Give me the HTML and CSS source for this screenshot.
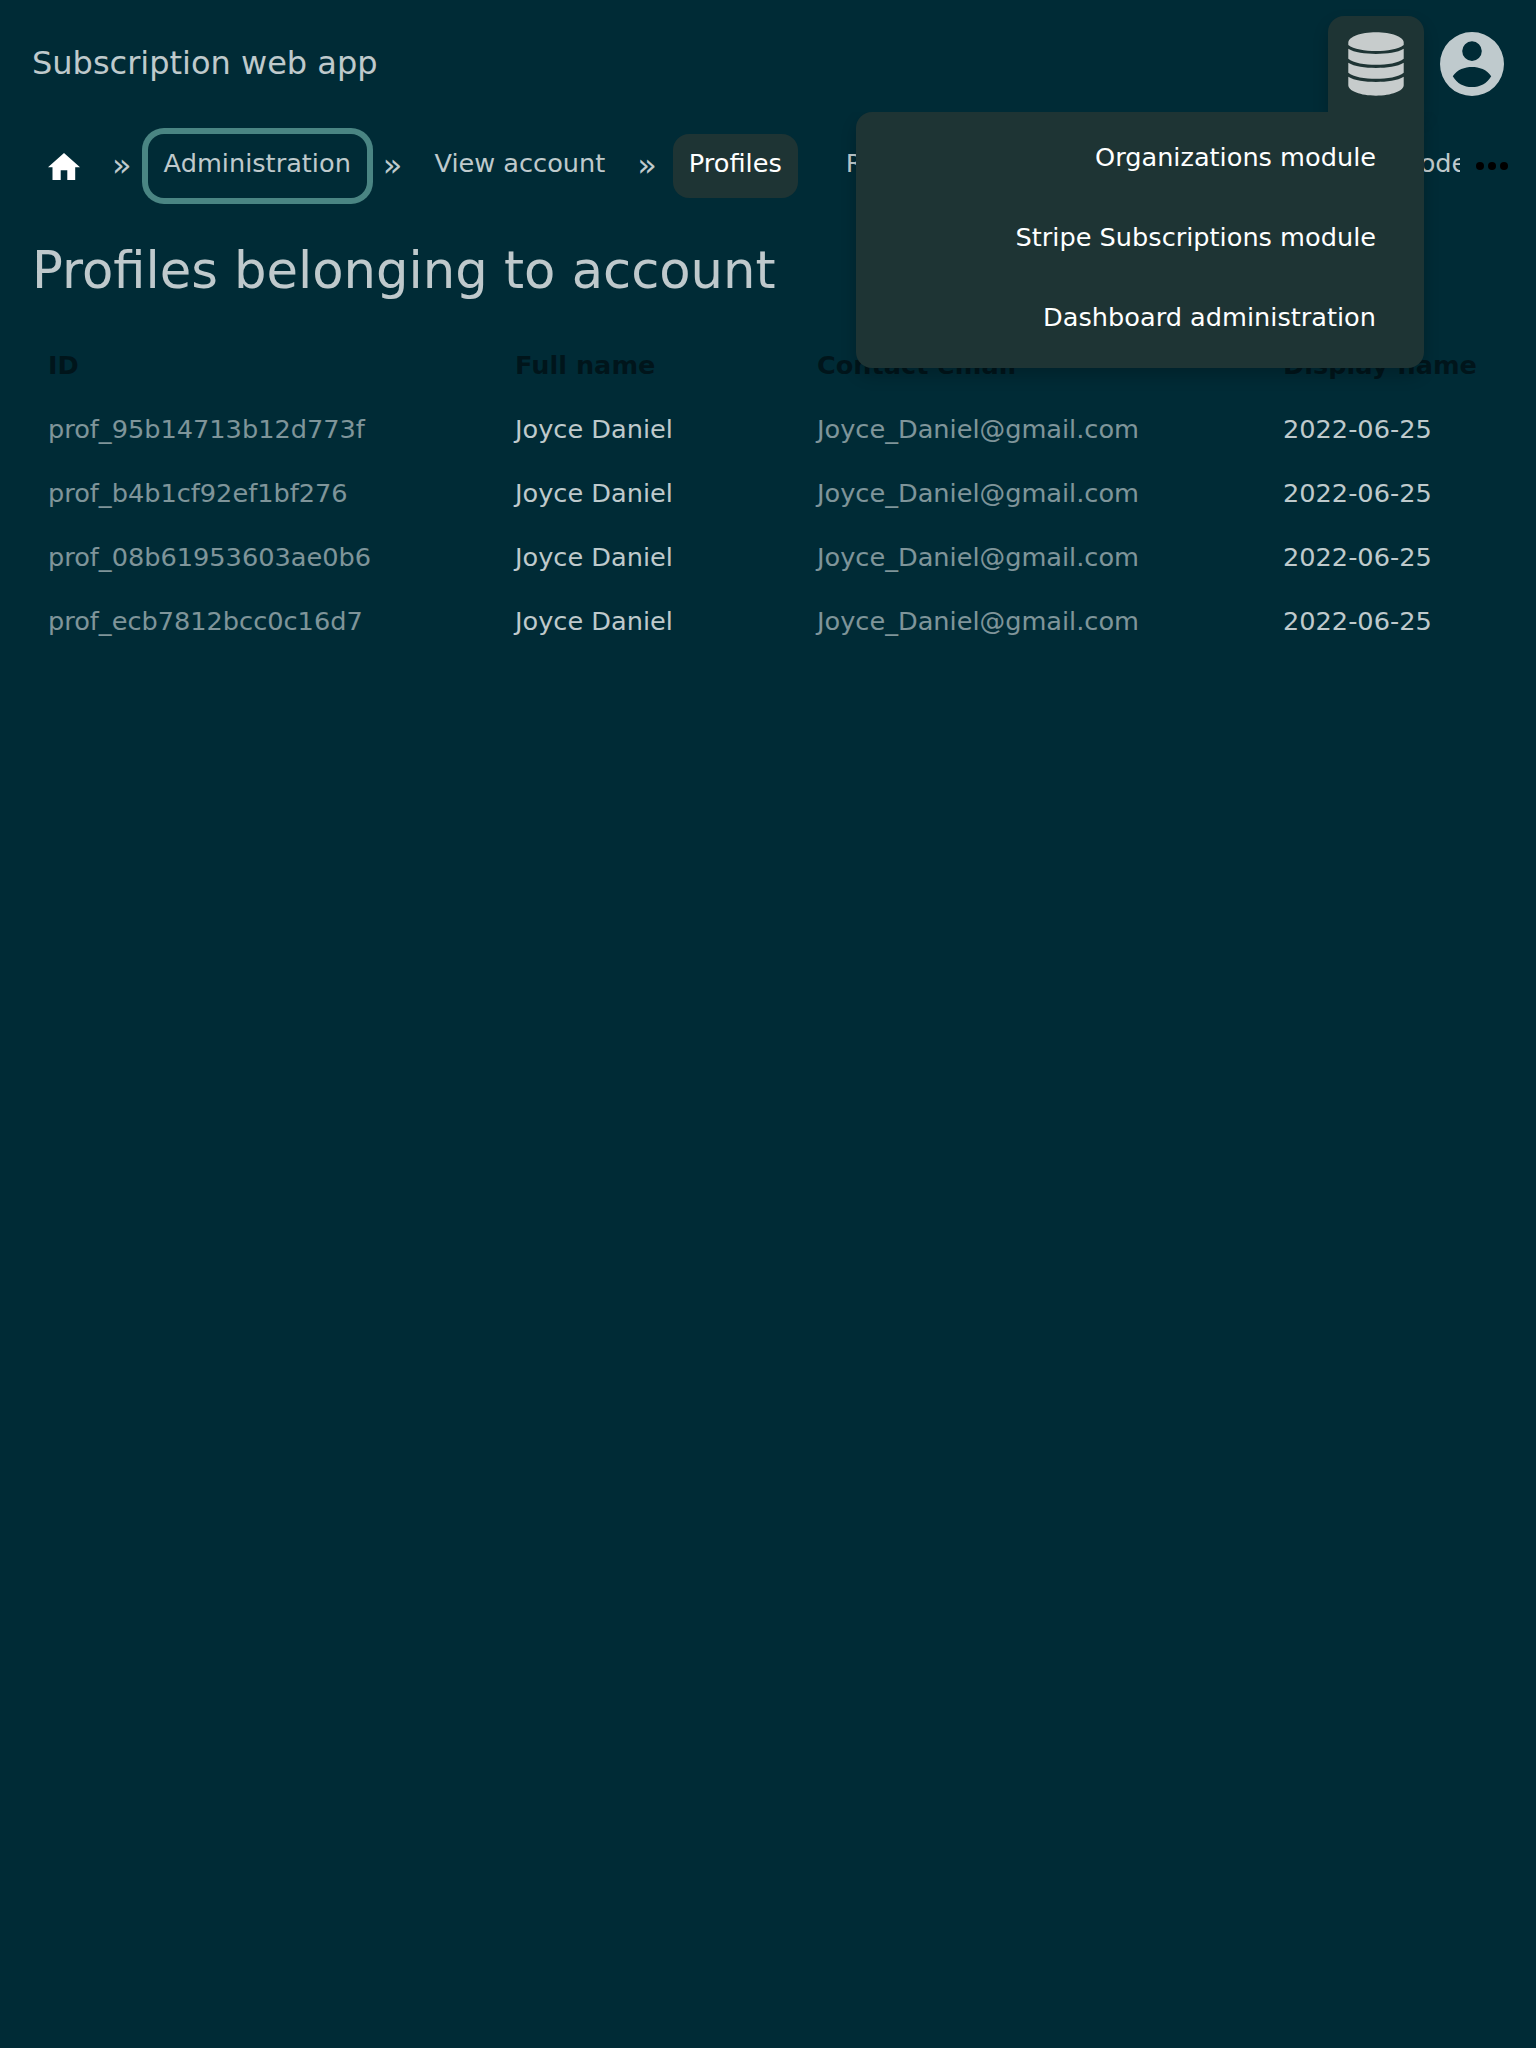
FILE: index.html
```html
<!DOCTYPE html>
<html lang="en">
<head>
<meta charset="utf-8">
<title>Subscription web app</title>
<link rel="stylesheet" href="styles.css">
</head>
<body>
<header class="header">
  <div class="brand">Subscription web app</div>
  <div class="menus">
    <div class="menu-tab">
      <svg class="icon-db" viewBox="-0.300 0 56.600 64">
        <path d="M28 0C43.500 0 56 4.700 56 10.500V12.700C51 17 39 18.800 28 18.800S5 17 0 12.700V10.500C0 4.700 12.500 0 28 0z"/>
        <path d="M0 16.700C6 20.500 17 21.800 28 21.800S50 20.500 56 16.700V26.700C51 31.200 39 32.800 28 32.800S5 31.200 0 26.700z"/>
        <path d="M0 30.800C6 34.700 17 36 28 36S50 34.700 56 30.800V40.900C51 45.400 39 47 28 47S5 45.400 0 40.900z"/>
        <path d="M0 45C6 48.900 17 50.200 28 50.200S50 48.900 56 45V53.500C56 59.300 43.500 64 28 64S0 59.300 0 53.500z"/>
      </svg>
      <nav class="dropdown">
        <a>Organizations module</a>
        <a>Stripe Subscriptions module</a>
        <a>Dashboard administration</a>
      </nav>
    </div>
    <svg class="icon-user" viewBox="0 0 64 64">
      <path fill-rule="evenodd" d="M32 0a32 32 0 1 0 0 64a32 32 0 1 0 0-64zM32 9.300a9.800 9.800 0 1 1 0 19.600a9.800 9.800 0 1 1 0-19.600zM12.800 44.200C17 37.500 25 35 32 35s15 2.500 19.200 9.200C47 51.500 40 55 32 55s-15-3.500-19.200-10.800z"/>
    </svg>
  </div>
</header>
<div class="navbar">
  <nav class="crumbs">
    <svg class="icon-home" viewBox="0 0 32 27"><path d="M16 0L32 14.300H27.200V27H19.300V17.300H12.700V27H4.500V14.300H0z"/></svg>
    <span class="sep first">»</span>
    <a class="crumb focused">Administration</a>
    <span class="sep">»</span>
    <a class="crumb">View account</a>
    <span class="sep">»</span>
    <a class="crumb active">Profiles</a>
    <a class="crumb next">Redeem</a>
    <a class="crumb last">Codes</a>
  </nav>
  <svg class="icon-more" viewBox="0 0 32 8"><circle cx="4" cy="4" r="4"/><circle cx="16" cy="4" r="4"/><circle cx="28" cy="4" r="4"/></svg>
</div>
<main>
  <h1>Profiles belonging to account</h1>
  <table>
    <thead><tr><th class="c-id">ID</th><th class="c-name">Full name</th><th class="c-mail">Contact email</th><th>Display name</th></tr></thead>
    <tbody>
      <tr><td class="dim">prof_95b14713b12d773f</td><td>Joyce Daniel</td><td class="dim">Joyce_Daniel@gmail.com</td><td>2022-06-25</td></tr>
      <tr><td class="dim">prof_b4b1cf92ef1bf276</td><td>Joyce Daniel</td><td class="dim">Joyce_Daniel@gmail.com</td><td>2022-06-25</td></tr>
      <tr><td class="dim">prof_08b61953603ae0b6</td><td>Joyce Daniel</td><td class="dim">Joyce_Daniel@gmail.com</td><td>2022-06-25</td></tr>
      <tr><td class="dim">prof_ecb7812bcc0c16d7</td><td>Joyce Daniel</td><td class="dim">Joyce_Daniel@gmail.com</td><td>2022-06-25</td></tr>
    </tbody>
  </table>
</main>
</body>
</html>
```
FILE: styles.css
```css
* { box-sizing: border-box; }
body {
  margin: 0;
  min-height: 2048px;
  background: #002b36;
  color: rgba(255, 255, 255, .75);
  font: 25.6px/32px "DejaVu Sans", sans-serif;
  white-space: nowrap;
}
svg { display: block; flex: none; }
.header { display: flex; justify-content: space-between; height: 112px; padding: 16px 32px 0; }
.brand { font-size: 32px; line-height: 94px; }
.menus { display: flex; gap: 16px; }
.menu-tab {
  position: relative;
  width: 96px;
  height: 96px;
  padding: 16px 20px;
  border-radius: 16px 16px 0 0;
  background: #1e3434;
  box-shadow: 0 8px 16px rgba(0, 0, 0, .2);
}
.icon-db { width: 56px; height: 64px; fill: #c7cccc; }
.icon-user { width: 64px; height: 64px; margin-top: 16px; fill: #bfcacd; }
.dropdown {
  position: absolute;
  z-index: 2;
  top: 96px;
  right: 0;
  width: 568px;
  height: 256px;
  padding: 8px 48px;
  border-radius: 16px 0 16px 16px;
  background: #1e3434;
  box-shadow: 0 8px 16px rgba(0, 0, 0, .2);
  clip-path: inset(0 -32px -32px -32px);
  color: #fff;
  text-align: right;
}
.dropdown a { display: block; line-height: 74px; height: 80px; }
.navbar { display: flex; align-items: center; height: 108px; padding-right: 28px; }
.crumbs { display: flex; flex: none; align-items: center; width: 1460px; height: 108px; overflow: hidden; padding-left: 48px; }
.icon-home { width: 32px; height: 27px; margin-top: 1px; fill: #fff; }
.sep { flex: none; padding: 0 16px; font-size: 32px; line-height: 62px; height: 64px; }
.sep.first { margin-left: 16px; }
.crumb { flex: none; height: 64px; padding: 0 16px; line-height: 58px; border-radius: 16px; }
.focused { box-shadow: 0 0 0 6px #4a8583; }
.active { background: #1e3434; color: #fff; }
.next { margin-left: 32px; width: 556px; }
.icon-more { width: 32px; height: 8px; margin-left: 16px; fill: #000; }
h1 { margin: 0; padding-left: 32px; height: 116px; font-size: 51.2px; font-weight: 400; line-height: 100px; }
table { width: 1472px; margin-left: 32px; border-collapse: collapse; table-layout: fixed; }
th, td { height: 64px; padding: 0 0 6px 16px; text-align: left; }
th { color: rgba(0, 0, 0, .5); font-weight: 700; }
.c-id { width: 467px; }
.c-name { width: 302px; }
.c-mail { width: 466px; }
.dim { color: rgba(255, 255, 255, .5); }
```
